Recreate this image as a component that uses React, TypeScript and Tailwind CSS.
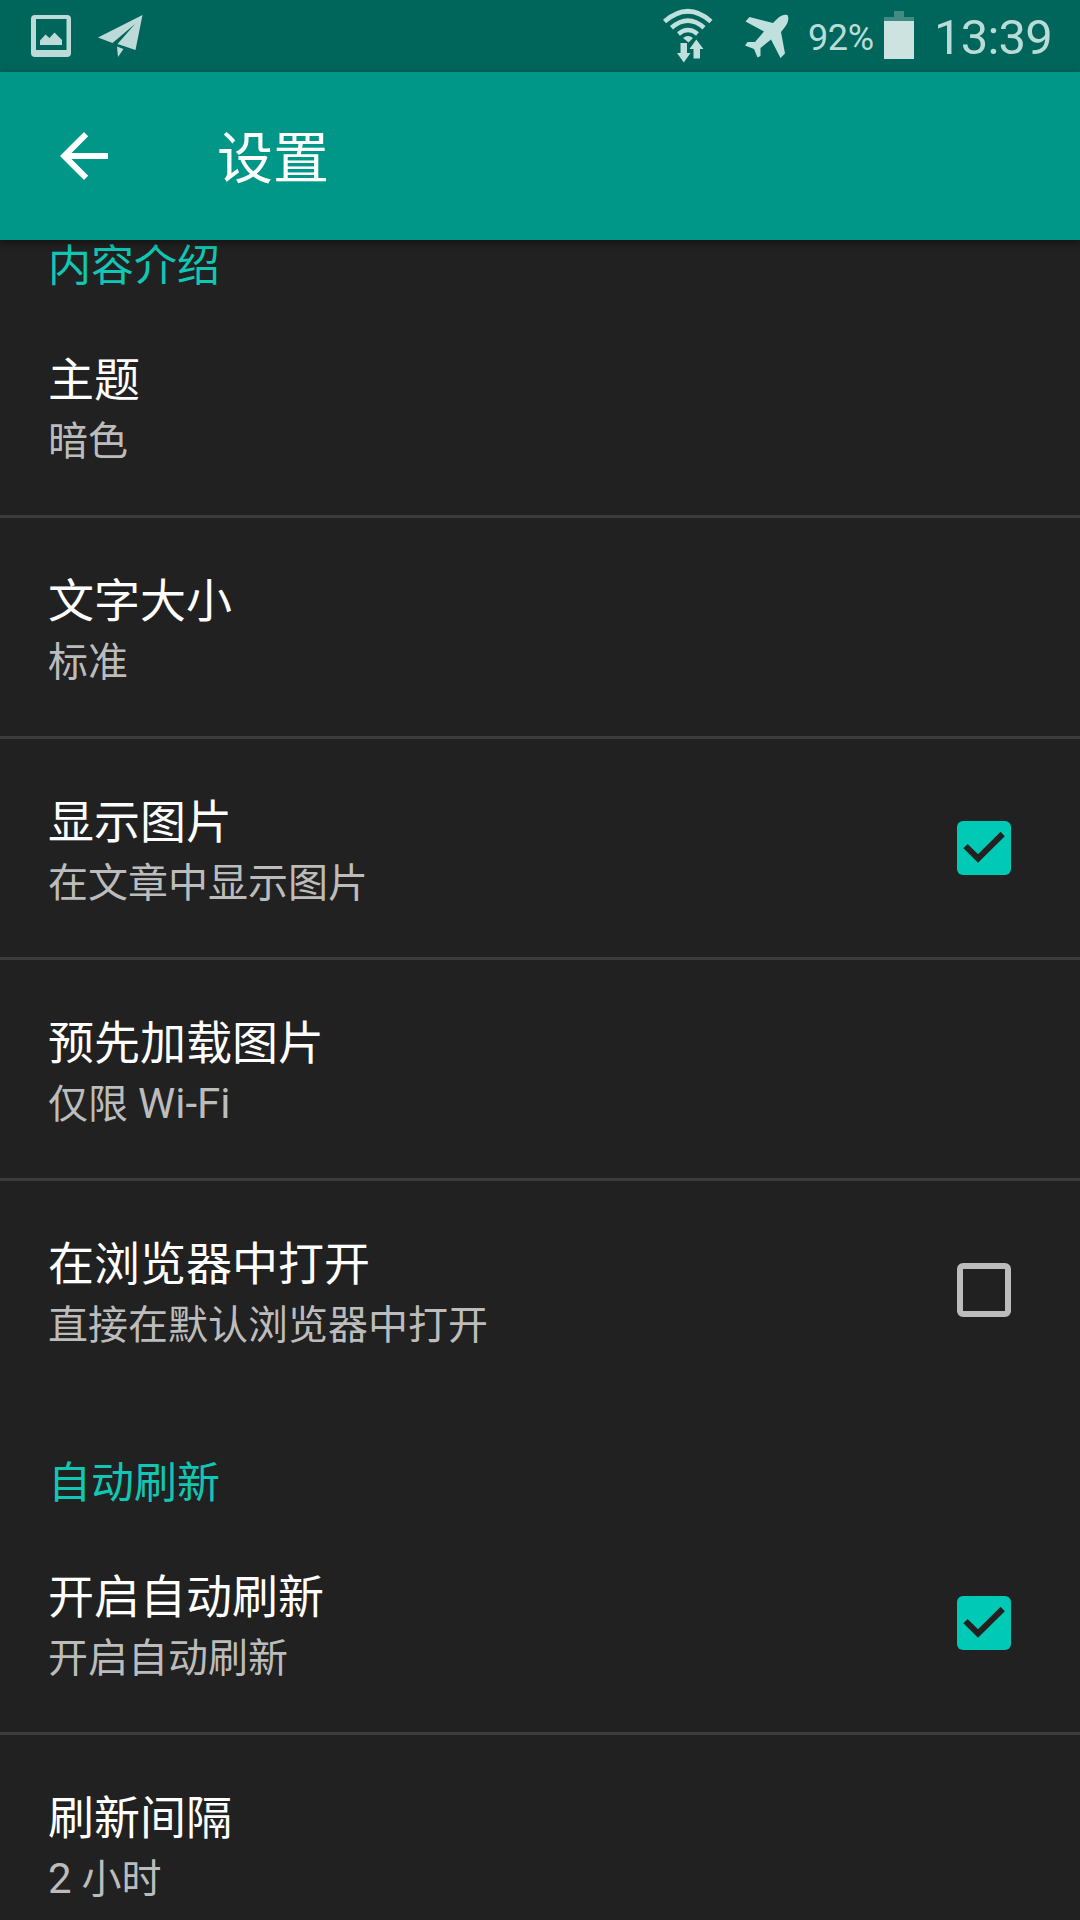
import React from "react";

type Setting = { title: string; summary: string; checked?: boolean };

const contentSettings: Setting[] = [
  { title: "主题", summary: "暗色" },
  { title: "文字大小", summary: "标准" },
  { title: "显示图片", summary: "在文章中显示图片", checked: true },
  { title: "预先加载图片", summary: "仅限 Wi-Fi" },
  { title: "在浏览器中打开", summary: "直接在默认浏览器中打开", checked: false },
];

const refreshSettings: Setting[] = [
  { title: "开启自动刷新", summary: "开启自动刷新", checked: true },
  { title: "刷新间隔", summary: "2 小时" },
];

function StatusBar() {
  return (
    <div className="flex h-[72px] shrink-0 items-start bg-[#00655a] text-[#b9dcd8]">
      <svg className="ml-[31px] mt-[15px] h-[42px] w-[40px]" viewBox="0 0 40 42" fill="#bcdad7">
        <path fillRule="evenodd" d="M4 0H36Q40 0 40 4V38Q40 42 36 42H4Q0 42 0 38V4Q0 0 4 0ZM5 4V35H35.500V4Z" />
        <path d="M9 30V25.500L14.500 19.500L18.500 23L23.500 17.500L31 25V30Z" />
      </svg>
      <svg className="ml-[27px] mt-[15px] h-[43px] w-[45px]" viewBox="0 0 45 43" fill="#bcdad7">
        <path d="M44.500 0L0 22.500L14.500 28L37 9L19.500 29L37.500 35Z" />
        <path d="M19 31.500L25.500 34L20 42Z" />
      </svg>
      <svg className="ml-[520px] mt-[8px] h-[55px] w-[50px]" viewBox="0 0 50 55" fill="none" stroke="#bfe0dc">
        <path d="M1.500 13.500Q25 -7 48 13.500" strokeWidth="4.600" />
        <path d="M8.500 19.800Q25 5.500 41 19.800" strokeWidth="4.600" />
        <path d="M15.500 26Q25 18.200 34.500 26" strokeWidth="4.400" />
        <path d="M20 30Q25 26 30 30L25.500 34.500Z" fill="#bfe0dc" stroke="none" />
        <path d="M17.500 35H24V45H27.500L20.800 54.500L14 45H17.500Z" fill="#bfe0dc" stroke="none" />
        <path d="M33.300 31.500L40.500 41H37V50.500H30.500V41H26.500Z" fill="#bfe0dc" stroke="none" />
      </svg>
      <svg className="ml-[32px] mt-[14px] h-[46px] w-[46px]" viewBox="0 0 46 46" fill="#bfe0dc">
        <path d="M42.500 1Q37.500 0 32 5L28 9L4.500 3L0.500 7.500L19 17.500L10 28L2.500 28L0 31.500L9 35L12.500 43.500L15.500 42L15.500 34L26 25.500L35.500 44L40 39.500L36 18L40 13Q45 6 42.500 1Z" />
      </svg>
      <span className="ml-[17px] mt-[17px] w-[76px] whitespace-nowrap text-[36px] leading-[42px] tracking-[-0.4px]">92%</span>
      <svg className="mt-[11px] h-[48px] w-[30px]" viewBox="0 0 30 48" shapeRendering="crispEdges">
        <path d="M10 0H20V6H30V10H0V6H10Z" fill="#408c83" />
        <path d="M0 10H30V48H0Z" fill="#cce3e0" />
      </svg>
      <span className="ml-[20px] mt-[9px] whitespace-nowrap text-[49px] leading-[58px] tracking-[-0.8px]">13:39</span>
    </div>
  );
}

function Checkbox({ checked }: { checked: boolean }) {
  if (!checked) return <div className="mt-[82px] size-[54px] rounded-[6px] border-[6px] border-[#bcbcbc]" />;
  return (
    <div className="mt-[82px] size-[54px] rounded-[6px] bg-[#00c9b6]">
      <svg className="size-full" viewBox="0 0 54 54" fill="none" stroke="#212121" strokeWidth="6">
        <path d="M8.500 25.200L21 37.500L45.700 13" />
      </svg>
    </div>
  );
}

function Summary({ text }: { text: string }) {
  const parts = text.split(/([A-Za-z0-9-]+)/);
  return (
    <div className="text-[40px] leading-[60px] text-[#bcbcbc]">
      {parts.map((part, i) =>
        i % 2 ? (
          <span key={i} className="text-[42px] leading-none">
            {part}
          </span>
        ) : (
          part
        ),
      )}
    </div>
  );
}

function Row({ title, summary, checked }: Setting) {
  return (
    <div className="flex h-[218px] shrink-0 justify-between pl-[48px] pr-[69px]">
      <div className="pt-[51px]">
        <div className="text-[46px] leading-[64px] text-white">{title}</div>
        <Summary text={summary} />
      </div>
      {checked !== undefined && <Checkbox checked={checked} />}
    </div>
  );
}

function Section({ name, items }: { name: string; items: Setting[] }) {
  return (
    <section className="shrink-0">
      <h2 className="h-[115px] pl-[48px] pt-[54px] text-[43px] leading-[60px] text-[#0fc7b4]">{name}</h2>
      <div className="divide-y-[3px] divide-[#3c3c3c]">
        {items.map((item) => (
          <div key={item.title}>
            <Row {...item} />
          </div>
        ))}
      </div>
    </section>
  );
}

export default function App() {
  return (
    <div className="flex h-[1920px] w-[1080px] flex-col overflow-hidden bg-[#212121] font-[Roboto,'Noto_Sans_CJK_SC',sans-serif]">
      <StatusBar />
      <header className="z-10 flex h-[168px] shrink-0 items-center bg-[#009788] shadow-[0_3px_8px_rgba(0,0,0,0.45)]">
        <svg className="ml-[60px] h-[48px] w-[48px]" viewBox="0 0 48 48" fill="#fff">
          <path d="M48 21H11.500L28.200 4.200L24 0L0 24L24 48L28.200 43.800L11.500 27H48Z" />
        </svg>
        <h1 className="ml-[109px] pt-[6px] text-[56px] leading-[80px] text-white">设置</h1>
      </header>
      <main className="-mt-[58px] flex flex-col">
        <Section name="内容介绍" items={contentSettings} />
        <Section name="自动刷新" items={refreshSettings} />
      </main>
    </div>
  );
}
